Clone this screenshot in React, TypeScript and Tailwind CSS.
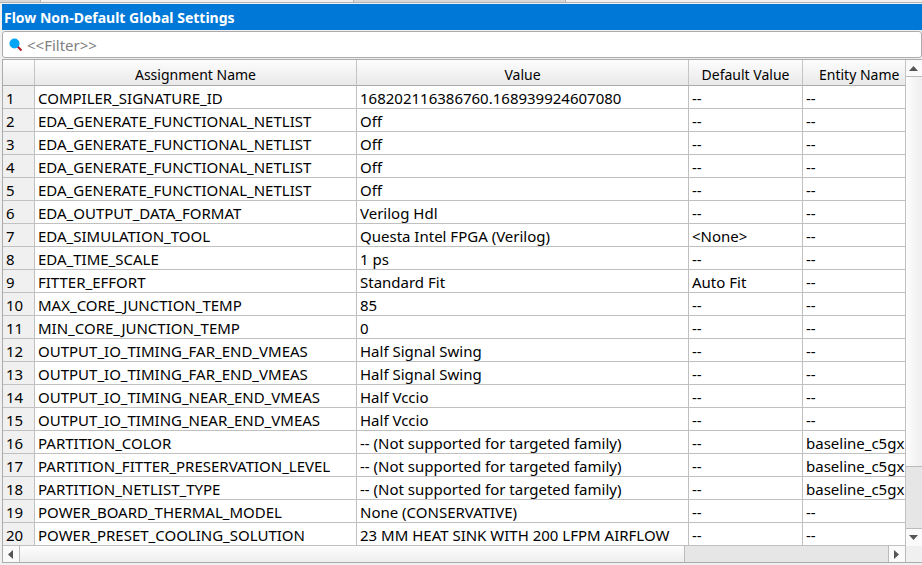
const rows: [string, string, string, string][] = [
  ["COMPILER_SIGNATURE_ID", "168202116386760.168939924607080", "--", "--"],
  ["EDA_GENERATE_FUNCTIONAL_NETLIST", "Off", "--", "--"],
  ["EDA_GENERATE_FUNCTIONAL_NETLIST", "Off", "--", "--"],
  ["EDA_GENERATE_FUNCTIONAL_NETLIST", "Off", "--", "--"],
  ["EDA_GENERATE_FUNCTIONAL_NETLIST", "Off", "--", "--"],
  ["EDA_OUTPUT_DATA_FORMAT", "Verilog Hdl", "--", "--"],
  ["EDA_SIMULATION_TOOL", "Questa Intel FPGA (Verilog)", "<None>", "--"],
  ["EDA_TIME_SCALE", "1 ps", "--", "--"],
  ["FITTER_EFFORT", "Standard Fit", "Auto Fit", "--"],
  ["MAX_CORE_JUNCTION_TEMP", "85", "--", "--"],
  ["MIN_CORE_JUNCTION_TEMP", "0", "--", "--"],
  ["OUTPUT_IO_TIMING_FAR_END_VMEAS", "Half Signal Swing", "--", "--"],
  ["OUTPUT_IO_TIMING_FAR_END_VMEAS", "Half Signal Swing", "--", "--"],
  ["OUTPUT_IO_TIMING_NEAR_END_VMEAS", "Half Vccio", "--", "--"],
  ["OUTPUT_IO_TIMING_NEAR_END_VMEAS", "Half Vccio", "--", "--"],
  ["PARTITION_COLOR", "-- (Not supported for targeted family)", "--", "baseline_c5gx"],
  ["PARTITION_FITTER_PRESERVATION_LEVEL", "-- (Not supported for targeted family)", "--", "baseline_c5gx"],
  ["PARTITION_NETLIST_TYPE", "-- (Not supported for targeted family)", "--", "baseline_c5gx"],
  ["POWER_BOARD_THERMAL_MODEL", "None (CONSERVATIVE)", "--", "--"],
  ["POWER_PRESET_COOLING_SOLUTION", "23 MM HEAT SINK WITH 200 LFPM AIRFLOW", "--", "--"],
];

const arrows = {
  up: "M0 5 L4.5 0 L9 5 Z",
  down: "M0 0 L9 0 L4.5 5 Z",
  left: "M5 0 L5 9 L0 4.5 Z",
  right: "M0 0 L5 4.5 L0 9 Z",
};

function ScrollButton({ direction, className }: { direction: keyof typeof arrows; className: string }) {
  const vertical = direction === "up" || direction === "down";
  return (
    <button
      type="button"
      aria-label={`Scroll ${direction}`}
      className={`flex shrink-0 items-center justify-center border-[#bbbbbb] bg-[#fafafa] pr-px ${className}`}
    >
      <svg width={vertical ? 9 : 5} height={vertical ? 5 : 9} fill="#555555" aria-hidden="true">
        <path d={arrows[direction]} />
      </svg>
    </button>
  );
}

function ColumnHeader({ children, className = "" }: { children?: string; className?: string }) {
  return (
    <th
      scope="col"
      className={`h-[26px] overflow-hidden border-r border-b border-r-[#c4c4c4] border-b-[#ababab] bg-linear-to-b from-[#fdfdfd] to-[#e9e9e9] p-0 pt-1 text-sm leading-[18px] font-normal ${className}`}
    >
      {children}
    </th>
  );
}

const cell =
  "h-[23px] overflow-hidden border-r border-b border-[#c0c0c0] p-0 pt-0.5 pl-[3px] text-left leading-5 font-normal";

export default function App() {
  return (
    <main className="min-h-screen bg-[#f0f0f0] font-['Noto_Sans',sans-serif] text-[15px] leading-[18px] text-black">
      <div className="flex h-[3px] border-b border-[#b4b4b4]">
        <div className="w-[41px] border-r border-[#b4b4b4] bg-[#d8d8d8]" />
        <div className="w-[312px]" />
        <div className="w-[213px] border-x border-[#b4b4b4] bg-[#d8d8d8]" />
      </div>

      <div className="pt-px pl-0.5">
        <h1 className="h-[26px] bg-[#0078d7] pt-[5px] pl-0.5 text-sm leading-[18px] font-bold text-white">
          Flow Non-Default Global Settings
        </h1>

        <label className="mt-px flex h-[27px] items-center gap-1 rounded-[3px] border border-[#ababab] bg-white pl-1.5">
          <svg width="14" height="14" viewBox="0 0 14 14" aria-hidden="true">
            <path d="M8.5 8.5 L12.5 12.5" stroke="#b3161b" strokeWidth="2" />
            <circle cx="5.5" cy="5.5" r="5" fill="#03a5f5" />
          </svg>
          <input
            type="text"
            aria-label="Filter"
            placeholder="<<Filter>>"
            className="min-w-0 flex-1 bg-transparent outline-none placeholder:text-[#808080]"
          />
        </label>

        <section className="mt-px border-t border-b border-l border-[#ababab]">
          <div className="flex">
            <div className="min-w-0 flex-1 overflow-hidden bg-white">
              <table className="w-full table-fixed border-separate border-spacing-0 whitespace-nowrap">
                <colgroup>
                  <col className="w-8" />
                  <col className="w-[322px]" />
                  <col />
                  <col className="w-[114px]" />
                  <col className="w-[103px]" />
                </colgroup>
                <thead>
                  <tr>
                    <ColumnHeader />
                    <ColumnHeader>Assignment Name</ColumnHeader>
                    <ColumnHeader>Value</ColumnHeader>
                    <ColumnHeader>Default Value</ColumnHeader>
                    <ColumnHeader className="pl-4 text-left">Entity Name</ColumnHeader>
                  </tr>
                </thead>
                <tbody>
                  {rows.map(([name, value, defaultValue, entity], index) => (
                    <tr key={index}>
                      <th scope="row" className={`${cell} bg-[#f0f0f0]`}>
                        {index + 1}
                      </th>
                      <td className={cell}>{name}</td>
                      <td className={cell}>{value}</td>
                      <td className={cell}>{defaultValue}</td>
                      <td className={cell}>{entity}</td>
                    </tr>
                  ))}
                </tbody>
              </table>
            </div>
            <div className="flex w-4 shrink-0 flex-col">
              <ScrollButton direction="up" className="h-[17px] border-b" />
              <div className="flex flex-1 flex-col bg-[#e6e6e6]">
                <div className="h-[390px] border-b border-[#bbbbbb] bg-linear-to-r from-[#fdfdfd] to-[#eeeeee]" />
              </div>
              <ScrollButton direction="down" className="h-[18px] border-t" />
            </div>
          </div>
          <div className="flex h-4">
            <ScrollButton direction="left" className="w-[17px] border-r" />
            <div className="flex flex-1 bg-[#e6e6e6]">
              <div className="w-[665px] border-r border-[#bbbbbb] bg-linear-to-b from-[#fdfdfd] to-[#eeeeee]" />
            </div>
            <ScrollButton direction="right" className="w-[18px] border-x" />
            <div className="w-4 shrink-0" />
          </div>
        </section>
      </div>
    </main>
  );
}
